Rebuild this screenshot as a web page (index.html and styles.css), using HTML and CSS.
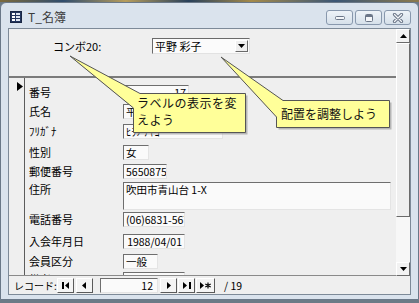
FILE: index.html
```html
<!DOCTYPE html>
<html lang="ja">
<head>
    <meta charset="UTF-8">
    <title>T_名簿</title>
    <link rel="stylesheet" href="styles.css">
</head>
<body>
<div class="screen">
    <div class="desktop-strip"></div>
    <div class="window">
        <div class="titlebar">
            <svg class="app-icon" width="12" height="12" viewBox="0 0 12 12">
                <rect x="0.5" y="0.5" width="11" height="11" fill="#24365e" stroke="#1a2744"/>
                <rect x="2" y="2" width="3" height="2" fill="#fff"/>
                <rect x="6" y="2" width="4" height="2" fill="#dfe6f2"/>
                <rect x="2" y="5" width="3" height="2" fill="#fff"/>
                <rect x="6" y="5" width="4" height="2" fill="#dfe6f2"/>
                <rect x="2" y="8" width="3" height="2" fill="#fff"/>
                <rect x="6" y="8" width="4" height="2" fill="#dfe6f2"/>
            </svg>
            <span class="title">T_名簿</span>
            <div class="win-btns">
                <span class="wbtn">
                    <svg width="12" height="6" viewBox="0 0 12 6"><rect x="1.5" y="1.5" width="9" height="3" rx="1" fill="#f4f6f9" stroke="#6b7688"/></svg>
                </span>
                <span class="wbtn">
                    <svg width="12" height="10" viewBox="0 0 12 10"><rect x="2.5" y="1.5" width="7" height="7" rx="1" fill="#f4f6f9" stroke="#6b7688"/><rect x="3" y="2" width="6" height="2" fill="#6b7688"/></svg>
                </span>
                <span class="wbtn">
                    <svg width="12" height="10" viewBox="0 0 12 10"><path d="M2.5 1.5 L9.5 8.5 M9.5 1.5 L2.5 8.5" stroke="#6b7688" stroke-width="3.2" stroke-linecap="round"/><path d="M2.5 1.5 L9.5 8.5 M9.5 1.5 L2.5 8.5" stroke="#f4f6f9" stroke-width="1.2" stroke-linecap="round"/></svg>
                </span>
            </div>
        </div>

        <div class="client">
            <div class="form-body">
                <div class="sections">
                    <div class="header-sec">
                        <span class="combo-label">コンボ20:</span>
                        <div class="combo">
                            <span class="combo-text">平野 彩子</span>
                            <span class="combo-arrow">
                                <svg width="7" height="4" viewBox="0 0 7 4"><path d="M0 0 H7 L3.5 4 Z" fill="#000"/></svg>
                            </span>
                        </div>
                    </div>
                    <div class="detail-sec">
                        <div class="selector">
                            <svg class="sel-mark" width="6" height="9" viewBox="0 0 6 9"><path d="M0 0 L6 4.5 L0 9 Z" fill="#000"/></svg>
                        </div>
                        <div class="fields">
                            <div class="row r1"><span class="lbl">番号</span><span class="box num w66">17</span></div>
                            <div class="row r2"><span class="lbl">氏名</span><span class="box w100">平野 彩子</span></div>
                            <div class="row r3"><span class="lbl">ﾌﾘｶﾞﾅ</span><span class="box w100">ﾋﾗﾉ ｱﾔｺ</span></div>
                            <div class="row r4"><span class="lbl">性別</span><span class="box w26">女</span></div>
                            <div class="row r5"><span class="lbl">郵便番号</span><span class="box w44">5650875</span></div>
                            <div class="row r6"><span class="lbl">住所</span><span class="box tall w268">吹田市青山台 1-X</span></div>
                            <div class="row r7"><span class="lbl">電話番号</span><span class="box w62">(06)6831-5678</span></div>
                            <div class="row r8"><span class="lbl">入会年月日</span><span class="box num w62">1988/04/01</span></div>
                            <div class="row r9"><span class="lbl">会員区分</span><span class="box w35">一般</span></div>
                            <div class="row r10"><span class="lbl">備考</span><span class="box w62"></span></div>
                        </div>
                    </div>
                </div>
                <div class="vscroll">
                    <div class="sbtn">
                        <svg width="7" height="4" viewBox="0 0 7 4"><path d="M0 4 H7 L3.5 0 Z" fill="#000"/></svg>
                    </div>
                    <div class="thumb"></div>
                    <div class="track"></div>
                    <div class="sbtn">
                        <svg width="7" height="4" viewBox="0 0 7 4"><path d="M0 0 H7 L3.5 4 Z" fill="#000"/></svg>
                    </div>
                </div>
            </div>

            <div class="navbar">
                <span class="nav-label">レコード:</span>
                <span class="nbtn">
                    <svg width="8" height="7" viewBox="0 0 8 7"><rect x="0" y="0" width="2" height="7" fill="#000"/><path d="M7 0 V7 L3 3.5 Z" fill="#000"/></svg>
                </span>
                <span class="nbtn gap2">
                    <svg width="5" height="7" viewBox="0 0 5 7"><path d="M4 0 V7 L0 3.5 Z" fill="#000"/></svg>
                </span>
                <span class="nav-input">12</span>
                <span class="nbtn">
                    <svg width="5" height="7" viewBox="0 0 5 7"><path d="M1 0 V7 L5 3.5 Z" fill="#000"/></svg>
                </span>
                <span class="nbtn gap1">
                    <svg width="8" height="7" viewBox="0 0 8 7"><path d="M0 0 V7 L4 3.5 Z" fill="#000"/><rect x="6" y="0" width="2" height="7" fill="#000"/></svg>
                </span>
                <span class="nbtn gap1 wide">
                    <svg width="11" height="7" viewBox="0 0 11 7"><path d="M0 0 V7 L4 3.5 Z" fill="#000"/><path d="M8 0.5 V6.5 M5.3 2 L10.7 5 M10.7 2 L5.3 5" stroke="#000" stroke-width="1.2"/></svg>
                </span>
                <span class="nav-total">/ 19</span>
            </div>
        </div>
    </div>

    <svg class="callouts" width="419" height="303" viewBox="0 0 419 303">
        <path d="M142 95.5 H247.5 V134.5 H135.5 V110 L72 58 Z" fill="#8f8f8f" opacity="0.6"/>
        <path d="M140 93.5 H245.5 V132.5 H133.5 V108 L70 56 Z" fill="#ffff99" stroke="#555" stroke-width="1"/>
        <path d="M285 102.5 H391.5 V129.5 H278.5 V119 L223 59 Z" fill="#8f8f8f" opacity="0.6"/>
        <path d="M283 100.5 H389.5 V127.5 H276.5 V117 L221 57 Z" fill="#ffff99" stroke="#555" stroke-width="1"/>
    </svg>
    <div class="callout-text c1">ラベルの表示を変<br>えよう</div>
    <div class="callout-text c2">配置を調整しよう</div>
</div>
</body>
</html>
```

FILE: styles.css
```css
body {
    margin: 0;
    background-color: #6c7a86;
    font-family: "Noto Sans CJK JP", "Noto Sans", sans-serif;
    color: #000;
}

.screen {
    position: relative;
    width: 419px;
    height: 303px;
    overflow: hidden;
}

.desktop-strip {
    height: 2px;
    background: linear-gradient(90deg, #7c6a3c, #2f4c6c 15%, #b79d5c 30%, #28405a 45%, #a48a4a 60%, #3b5675 80%, #8c7a4c);
}

.window {
    box-sizing: border-box;
    height: 298px;
    border: 1px solid #6a7888;
    border-radius: 6px 6px 0 0;
    background-color: #dae3ed;
    padding: 0 7px 4px;
    display: flex;
    flex-direction: column;
}

/* title bar */
.titlebar {
    height: 25px;
    display: flex;
    align-items: flex-start;
}

.app-icon {
    margin: 8px 0 0 2px;
}

.title {
    margin: 6px 0 0 6px;
    font-size: 12px;
    line-height: 15px;
    color: #3c3c3c;
}

.win-btns {
    margin: 7px 0 0 auto;
    display: flex;
    gap: 2px;
}

.wbtn {
    box-sizing: border-box;
    width: 27px;
    height: 15px;
    border: 1px solid #8898ad;
    border-radius: 3px;
    background: linear-gradient(#eef3f8, #d6e0ea);
    display: flex;
    align-items: center;
    justify-content: center;
}

/* client area */
.client {
    flex: 1;
    border: 1px solid #7d8a98;
    background-color: #efefef;
    display: flex;
    flex-direction: column;
}

.form-body {
    height: 247px;
    display: flex;
}

.sections {
    flex: 1;
    display: flex;
    flex-direction: column;
}

.header-sec {
    box-sizing: border-box;
    height: 49px;
    border-bottom: 2px solid #7b7b7b;
    padding: 9px 0 0 44px;
    display: flex;
    align-items: flex-start;
}

.combo-label {
    width: 99px;
    font-size: 11px;
    line-height: 16px;
}

.combo {
    box-sizing: border-box;
    width: 98px;
    height: 16px;
    border-top: 1px solid #6a6a6a;
    border-left: 1px solid #6a6a6a;
    border-bottom: 1px solid #e2e2e2;
    border-right: 1px solid #e2e2e2;
    background-color: #fbfbfb;
    display: flex;
    align-items: center;
    padding: 0 1px 0 2px;
}

.combo-text {
    flex: 1;
    font-size: 11px;
    line-height: 14px;
}

.combo-arrow {
    box-sizing: border-box;
    width: 13px;
    height: 12px;
    background-color: #efefef;
    border-top: 1px solid #fff;
    border-left: 1px solid #fff;
    border-right: 1px solid #6a6a6a;
    border-bottom: 1px solid #6a6a6a;
    display: flex;
    align-items: center;
    justify-content: center;
}

.detail-sec {
    box-sizing: border-box;
    height: 198px;
    border-bottom: 1px solid #8a8a8a;
    display: flex;
    overflow: hidden;
}

.selector {
    width: 16px;
    border-right: 1px solid #5c5c5c;
    padding: 4px 0 0 8px;
    box-sizing: border-box;
}

.sel-mark {
    display: block;
}

.fields {
    flex: 1;
    padding: 7px 0 0 4px;
}

.row {
    display: flex;
    align-items: flex-start;
}

.r1 { height: 19px; }
.r2 { height: 20px; }
.r3 { height: 21px; }
.r4 { height: 19px; }
.r5 { height: 18px; }
.r6 { height: 30px; }
.r7 { height: 22px; }
.r8 { height: 20px; }
.r9 { height: 18px; }
.r10 { height: 15px; }

.lbl {
    width: 94px;
    font-size: 11px;
    line-height: 15px;
}

.box {
    box-sizing: border-box;
    height: 15px;
    border-top: 1px solid #6e6e6e;
    border-left: 1px solid #6e6e6e;
    border-bottom: 1px solid #e4e4e4;
    border-right: 1px solid #e4e4e4;
    background-color: #fafafa;
    font-size: 10.5px;
    line-height: 13px;
    padding: 0 2px;
    white-space: nowrap;
    overflow: hidden;
}

.box.num {
    text-align: right;
}

.box.tall {
    height: 28px;
}

.w26 { width: 26px; }
.w35 { width: 35px; }
.w44 { width: 44px; }
.w62 { width: 62px; }
.w66 { width: 66px; }
.w100 { width: 100px; }
.w268 { width: 268px; }

/* vertical scrollbar */
.vscroll {
    width: 14px;
    display: flex;
    flex-direction: column;
    background-color: #f6f6f6;
}

.sbtn {
    box-sizing: border-box;
    height: 14px;
    background-color: #f2f2f2;
    border-top: 1px solid #fff;
    border-left: 1px solid #fff;
    border-right: 1px solid #6a6a6a;
    border-bottom: 1px solid #6a6a6a;
    display: flex;
    align-items: center;
    justify-content: center;
}

.thumb {
    box-sizing: border-box;
    height: 174px;
    background-color: #efefef;
    border-top: 1px solid #fff;
    border-left: 1px solid #fff;
    border-right: 1px solid #6a6a6a;
    border-bottom: 1px solid #6a6a6a;
}

.track {
    flex: 1;
    background-color: #f7f7f7;
}

/* navigation bar */
.navbar {
    flex: 1;
    display: flex;
    align-items: center;
    padding-left: 5px;
    font-size: 10px;
}

.nav-label {
    width: 43px;
    line-height: 15px;
}

.nbtn {
    box-sizing: border-box;
    width: 17px;
    height: 15px;
    background-color: #f4f4f4;
    border-top: 1px solid #fff;
    border-left: 1px solid #fff;
    border-right: 1px solid #5a5a5a;
    border-bottom: 1px solid #5a5a5a;
    display: flex;
    align-items: center;
    justify-content: center;
}

.nbtn.gap2 {
    margin-left: 2px;
}

.nbtn.gap1 {
    margin-left: 1px;
}

.nbtn.wide {
    width: 19px;
}

.nav-input {
    box-sizing: border-box;
    width: 58px;
    height: 15px;
    margin: 0 2px 0 7px;
    border-top: 1px solid #6e6e6e;
    border-left: 1px solid #6e6e6e;
    border-bottom: 1px solid #e4e4e4;
    border-right: 1px solid #e4e4e4;
    background-color: #fafafa;
    text-align: right;
    padding-right: 4px;
    line-height: 13px;
    font-size: 10.5px;
}

.nav-total {
    margin-left: 9px;
    font-size: 10.5px;
}

/* callouts */
.callouts {
    position: absolute;
    left: 0;
    top: 0;
}

.callout-text {
    position: absolute;
    font-size: 12px;
    line-height: 17px;
    letter-spacing: 0.5px;
    color: #111;
}

.c1 {
    left: 137px;
    top: 94px;
}

.c2 {
    left: 281px;
    top: 105px;
    letter-spacing: 0;
}
```
